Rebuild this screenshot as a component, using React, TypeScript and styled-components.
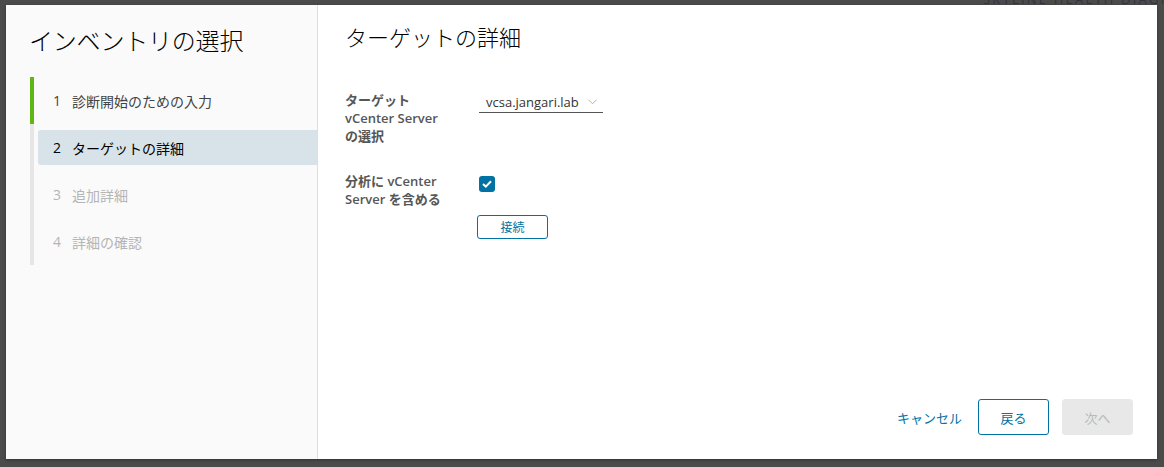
import React from "react";
import styled, { createGlobalStyle } from "styled-components";

const GlobalStyle = createGlobalStyle`
  html, body {
    margin: 0;
    padding: 0;
    background: #4b4b4b;
    overflow: hidden;
  }
  body {
    font-family: "Open Sans", "Noto Sans CJK JP", sans-serif;
  }
  * { box-sizing: border-box; }
`;

const FONT = `"Open Sans", "Noto Sans CJK JP", sans-serif`;

const Page = styled.div`
  position: relative;
  width: 1164px;
  height: 467px;
  padding: 5px 7px 8px 6px;
  overflow: hidden;
`;

const BehindTitle = styled.div`
  position: absolute;
  top: -10px;
  left: 983px;
  font-family: ${FONT};
  font-size: 13px;
  letter-spacing: 2.2px;
  color: #34343f;
  white-space: nowrap;
`;

const Modal = styled.div`
  position: relative;
  display: flex;
  width: 1151px;
  height: 454px;
  background: #ffffff;
  box-shadow: 0 1px 3px rgba(0, 0, 0, 0.35);
`;

const Sidebar = styled.aside`
  width: 312px;
  flex: none;
  background: #fafafa;
  border-right: 1px solid #dedede;
  padding: 21px 0 0 24px;
`;

const SideTitle = styled.h2`
  margin: 0;
  font-family: ${FONT};
  font-size: 24px;
  font-weight: 300;
  line-height: 30px;
  color: #000;
  letter-spacing: -0.2px;
  margin-left: -1px;
`;

const StepList = styled.ol`
  list-style: none;
  margin: 21px 0 0 0;
  padding: 0;
  border-left: 4px solid #e6e6e6;
`;

const StepItem = styled.li<{ $done?: boolean }>`
  height: 47px;
  padding: 6px 0 6px 4px;
  margin-left: -4px;
  border-left: 4px solid ${(p) => (p.$done ? "#5eb715" : "transparent")};
`;

const StepButton = styled.div<{ $state: "done" | "current" | "todo" }>`
  display: flex;
  align-items: center;
  height: 35px;
  padding-left: 15px;
  border-radius: 3px 0 0 3px;
  font-family: ${FONT};
  font-size: 14px;
  background: ${(p) => (p.$state === "current" ? "#d8e3e9" : "transparent")};
  color: ${(p) =>
    p.$state === "todo" ? "#b5b5b5" : p.$state === "current" ? "#000" : "#444"};
  font-weight: 400;
`;

const StepNum = styled.span`
  width: 19px;
  flex: none;
`;

const Content = styled.section`
  flex: 1;
  display: flex;
  flex-direction: column;
  padding: 17px 24px 24px 27px;
`;

const Title = styled.h3`
  margin: 0;
  font-family: ${FONT};
  font-size: 22px;
  font-weight: 300;
  line-height: 30px;
  color: #000;
`;

const Form = styled.div`
  display: flex;
  flex-direction: column;
  margin-top: 39px;
`;

const Row = styled.div<{ $gap?: number }>`
  display: flex;
  align-items: flex-start;
  margin-top: ${(p) => p.$gap ?? 0}px;
`;

const Label = styled.div`
  width: 134px;
  flex: none;
  font-family: ${FONT};
  font-size: 13px;
  font-weight: 600;
  line-height: 18px;
  color: #565656;
`;

const SelectBox = styled.div`
  display: flex;
  align-items: center;
  width: 124px;
  height: 22px;
  padding: 0 6px 0 7px;
  border-bottom: 1px solid #565656;
  font-family: ${FONT};
  font-size: 13px;
  color: #333;
  justify-content: space-between;
`;

const Control = styled.div`
  display: flex;
  flex-direction: column;
  align-items: flex-start;
`;

const CheckBox = styled.div`
  width: 16px;
  height: 16px;
  margin-top: 4px;
  border-radius: 3px;
  background: #0072a3;
  display: flex;
  align-items: center;
  justify-content: center;
`;

const SmallButton = styled.button`
  margin-top: 23px;
  margin-left: -2px;
  width: 71px;
  height: 24px;
  border: 1px solid #0072a3;
  border-radius: 3px;
  background: #fff;
  color: #0072a3;
  font-family: ${FONT};
  font-size: 12px;
  padding: 0;
`;

const Footer = styled.div`
  margin-top: auto;
  display: flex;
  justify-content: flex-end;
  align-items: center;
`;

const LinkButton = styled.button`
  border: none;
  background: none;
  padding: 0;
  margin-right: 16px;
  color: #0072a3;
  font-family: ${FONT};
  font-size: 13px;
  height: 36px;
`;

const FooterButton = styled.button<{ $disabled?: boolean }>`
  width: 71px;
  height: 36px;
  margin-left: ${(p) => (p.$disabled ? 13 : 0)}px;
  border-radius: 3px;
  border: 1px solid ${(p) => (p.$disabled ? "#e8e8e8" : "#0072a3")};
  background: ${(p) => (p.$disabled ? "#e8e8e8" : "#fff")};
  color: ${(p) => (p.$disabled ? "#b8b8b8" : "#0072a3")};
  font-family: ${FONT};
  font-size: 13px;
  padding: 0;
`;

const Chevron = () => (
  <svg width="9" height="6" viewBox="0 0 9 6" fill="none">
    <path d="M0.5 0.8 L4.5 4.8 L8.5 0.8" stroke="#b0b0b0" strokeWidth="1" />
  </svg>
);

const Check = () => (
  <svg width="10" height="8" viewBox="0 0 10 8" fill="none">
    <path d="M1 4 L3.8 6.6 L9 1.2" stroke="#fff" strokeWidth="2" />
  </svg>
);

export default function App() {
  return (
    <>
      <GlobalStyle />
      <Page>
        <BehindTitle>SKYLINE HEALTH DIAGNOSTICS</BehindTitle>
        <Modal>
          <Sidebar>
            <SideTitle>インベントリの選択</SideTitle>
            <StepList>
              <StepItem $done>
                <StepButton $state="done">
                  <StepNum>1</StepNum>診断開始のための入力
                </StepButton>
              </StepItem>
              <StepItem>
                <StepButton $state="current">
                  <StepNum>2</StepNum>ターゲットの詳細
                </StepButton>
              </StepItem>
              <StepItem>
                <StepButton $state="todo">
                  <StepNum>3</StepNum>追加詳細
                </StepButton>
              </StepItem>
              <StepItem>
                <StepButton $state="todo">
                  <StepNum>4</StepNum>詳細の確認
                </StepButton>
              </StepItem>
            </StepList>
          </Sidebar>
          <Content>
            <Title>ターゲットの詳細</Title>
            <Form>
              <Row>
                <Label>
                  ターゲット
                  <br />
                  vCenter Server
                  <br />
                  の選択
                </Label>
                <SelectBox>
                  vcsa.jangari.lab
                  <Chevron />
                </SelectBox>
              </Row>
              <Row $gap={27}>
                <Label>
                  分析に vCenter
                  <br />
                  Server を含める
                </Label>
                <Control>
                  <CheckBox>
                    <Check />
                  </CheckBox>
                  <SmallButton>接続</SmallButton>
                </Control>
              </Row>
            </Form>
            <Footer>
              <LinkButton>キャンセル</LinkButton>
              <FooterButton>戻る</FooterButton>
              <FooterButton $disabled>次へ</FooterButton>
            </Footer>
          </Content>
        </Modal>
      </Page>
    </>
  );
}
